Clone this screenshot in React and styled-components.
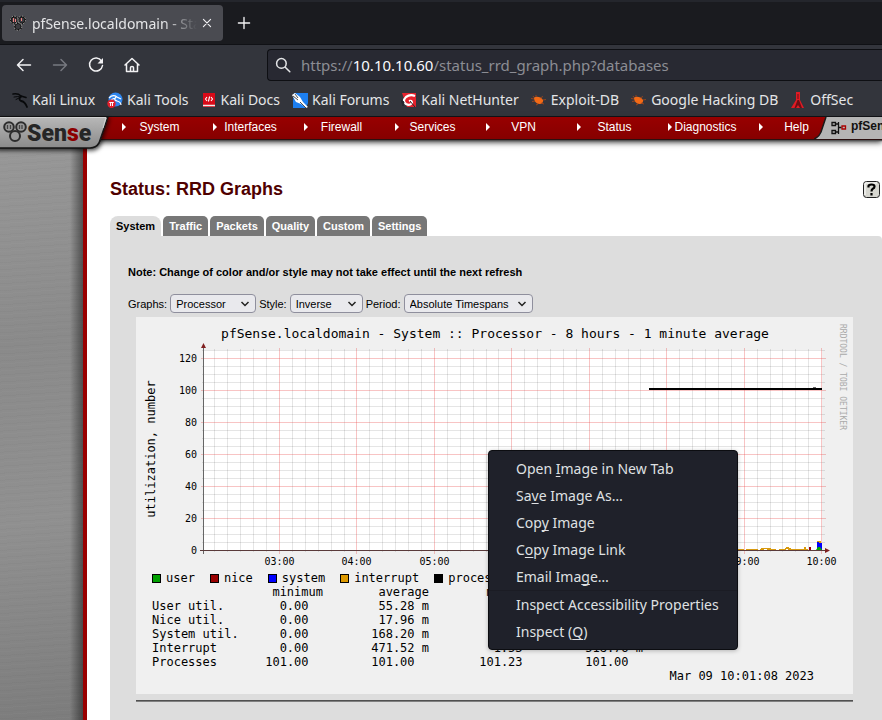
import React from "react";
import styled, { createGlobalStyle, css } from "styled-components";

const GlobalStyle = createGlobalStyle`
  * { box-sizing: border-box; }
  html, body { margin: 0; height: 100%; }
  body { overflow: hidden; background: #fff; }
  #root { height: 100%; }
  button, select, input { font: inherit; color: inherit; }
`;

const uiFont = `"Noto Sans", sans-serif`;
const pageFont = `"Liberation Sans", Arial, sans-serif`;
const monoFont = `"DejaVu Sans Mono", monospace`;

const Window = styled.div`
  position: relative;
  display: flex;
  flex-direction: column;
  height: 100vh;
  overflow: hidden;
`;

/* Browser chrome */

const Chrome = styled.header`
  flex: none;
  background: #33353c;
  border-bottom: 1px solid #101115;
  color: #e4e5e7;
  font-family: ${uiFont};
  font-size: 14px;
`;

const TabStrip = styled.div`
  display: flex;
  align-items: center;
  gap: 13px;
  height: 45px;
  padding: 0 2px;
  background: #1a1b1f;
  border-top: 2px solid #24262c;
  border-bottom: 1px solid #101115;
`;

const BrowserTab = styled.div`
  display: flex;
  align-items: center;
  gap: 6px;
  width: 221px;
  height: 36px;
  padding: 0 8px;
  border-radius: 4px;
  background: #4a4b51;
`;

const TabTitle = styled.span`
  flex: 1;
  overflow: hidden;
  margin-right: -4px;
  white-space: nowrap;
  mask-image: linear-gradient(90deg, #000 80%, transparent 100%);
`;

const IconButton = styled.button`
  display: grid;
  place-items: center;
  width: ${(p) => p.$size || 20}px;
  height: ${(p) => p.$size || 20}px;
  padding: 0;
  border: 0;
  background: none;
  color: ${(p) => (p.$dim ? "#777980" : "#f2f2f4")};
`;

const Toolbar = styled.div`
  display: flex;
  align-items: center;
  height: 40px;
`;

const NavButtons = styled.div`
  display: flex;
  gap: 16px;
  width: 267px;
  padding-left: 14px;
`;

const AddressBar = styled.form`
  display: flex;
  flex: 1;
  align-items: center;
  gap: 10px;
  height: 32px;
  padding-left: 7px;
  border: 1px solid #0e0f13;
  border-right: 0;
  border-radius: 4px 0 0 4px;
  background: #282932;
  font-size: 15px;
`;

const Address = styled.a`
  color: #8c8d94;
  text-decoration: none;
  b { color: #fbfbfe; font-weight: 400; }
`;

const Bookmarks = styled.nav`
  display: flex;
  align-items: center;
  gap: 12px;
  height: 31px;
  padding: 0 0 2px 12px;
  white-space: nowrap;
`;

const Bookmark = styled.a`
  display: flex;
  flex: none;
  align-items: center;
  gap: 4px;
  color: inherit;
  text-decoration: none;
`;

/* pfSense page */

const SiteHeader = styled.header`
  position: relative;
  z-index: 1;
  display: flex;
  flex: none;
  height: 22px;
  background: linear-gradient(#980000, #860000);
  box-shadow: 0 1px 0 #2b1111, 0 2px 1px #555, 0 3px 6px #222;
  color: #fff;
  font: 12px/20px ${pageFont};
`;

const LogoLink = styled.a`
  flex: none;
  width: 114px;
  svg { display: block; overflow: visible; }
`;

const SiteMenu = styled.nav`
  display: flex;
  flex: none;
`;

const MenuButton = styled.button`
  display: grid;
  grid-template-columns: 12px 1fr 12px;
  align-items: center;
  width: 91px;
  padding: 0 0 2px;
  border: 0;
  background: none;
  white-space: nowrap;
  svg { justify-self: end; }
  span { justify-self: center; }
`;

const HostLabel = styled.div`
  display: flex;
  flex: 1;
  align-items: flex-start;
  margin-left: -28px;
  overflow: hidden;
  color: #111;
  font-weight: bold;
  white-space: nowrap;
  svg { flex: none; }
`;

const HostName = styled.span`
  flex: 1;
  height: 22px;
  padding-left: 3px;
  background: #b5b5b5;
  line-height: 18px;
`;

const SiteBody = styled.div`
  display: flex;
  flex: 1;
  min-height: 0;
`;

const SideRail = styled.div`
  flex: none;
  width: 87px;
  border-right: 4px solid #990000;
  background:
    linear-gradient(90deg, transparent 70px, rgba(0, 0, 0, 0.45)),
    repeating-linear-gradient(176deg, rgba(255,255,255,0.02) 0 1px, transparent 1px 4px, rgba(0,0,0,0.02) 4px 5px, transparent 5px 7px),
    linear-gradient(170deg, #989898, #8a8a8a 35%, #909090 65%, #7c7c7c);
`;

const Content = styled.main`
  flex: 1;
  min-width: 0;
  padding: 40px 0 0 23px;
  font: 11px/14px ${pageFont};
  color: #000;
`;

const TitleRow = styled.div`
  display: flex;
  align-items: center;
  justify-content: space-between;
  height: 20px;
  padding-right: 2px;
`;

const PageTitle = styled.h1`
  margin: 0;
  color: #4f0000;
  font-size: 18px;
  line-height: 22px;
`;

const PageTabs = styled.nav`
  display: flex;
  gap: 2px;
  margin-top: 17px;
`;

const PageTab = styled.a`
  height: 20px;
  padding: 0 6px;
  border-radius: 5px 5px 0 0;
  background: #777;
  color: #fff;
  font-weight: bold;
  line-height: 20px;
  text-decoration: none;
  ${(p) => p.$active && css`
    border-radius: 8px 8px 0 0;
    background: #ddd;
    color: #000;
  `}
`;

const Panel = styled.section`
  min-height: 100vh;
  padding: 29px 29px 0 18px;
  border-radius: 0 4px 0 0;
  background: #ddd;
`;

const Note = styled.p`
  margin: 0;
  font-weight: bold;
`;

const Options = styled.form`
  display: flex;
  align-items: center;
  gap: 3px;
  margin: 15px 0 4px;
`;

const Option = styled.label`
  display: flex;
  align-items: center;
  gap: 3px;
`;

const SelectBox = styled.span`
  display: inline-grid;
  align-items: center;
  width: ${(p) => p.$width}px;
  > * { grid-area: 1 / 1; }
  svg { justify-self: end; margin-right: 6px; pointer-events: none; }
`;

const Select = styled.select`
  width: 100%;
  height: 19px;
  padding: 0 5px;
  border: 1px solid #8f8f9d;
  border-radius: 4px;
  background: #e9e9ed;
  appearance: none;
`;

const GraphCard = styled.figure`
  margin: 0 0 6px 8px;
  padding-bottom: 11px;
  background: #f0f0f0;
  font: 12px/14px ${monoFont};
`;

const Chart = styled.svg`
  display: block;
  width: 100%;
  font-family: ${monoFont};
`;

const Legend = styled.ul`
  display: flex;
  gap: 15px;
  margin: 0;
  padding: 0 0 0 16px;
  list-style: none;
`;

const LegendItem = styled.li`
  display: flex;
  align-items: center;
  gap: 5px;
  &::before {
    content: "";
    width: 7px;
    height: 7px;
    border: 1px solid #000;
    background: ${(p) => p.$color};
  }
`;

const Stats = styled.table`
  margin-left: 16px;
  border-collapse: collapse;
  table-layout: fixed;
  width: 491px;
  th, td {
    height: 14px;
    padding: 0;
    font-weight: 400;
    text-align: right;
    white-space: pre;
  }
  tbody th { text-align: left; }
  th:nth-child(1) { width: 86px; }
  th:nth-child(2) { width: 85px; }
  th:nth-child(3) { width: 106px; }
  th:nth-child(4) { width: 108px; }
`;

const Stamp = styled.figcaption`
  padding-right: 39px;
  text-align: right;
`;

const Rule = styled.hr`
  height: 2px;
  margin: 0 0 0 8px;
  border: 0;
  border-top: 1px solid #505050;
  background: #808080;
`;

/* Context menu, floating above the page */

const ContextMenu = styled.div`
  position: absolute;
  z-index: 2;
  top: 450px;
  left: 488px;
  width: 250px;
  padding: 4px 0;
  border: 1px solid #0c0d11;
  border-radius: 4px;
  background: #1f212a;
  box-shadow: 0 1px 4px rgba(0, 0, 0, 0.25);
  color: #dfe0e2;
  font: 14px/27px ${uiFont};
`;

const ContextItem = styled.button`
  display: block;
  width: 100%;
  padding: 0 0 0 27px;
  border: 0;
  background: none;
  text-align: left;
  u { text-underline-offset: 2px; text-decoration-skip-ink: none; }
`;

const MenuDivider = styled.div`
  height: 1px;
  background: #1b1c24;
`;

/* Drawings */

const Line = ({ size = 20, d, w = 1.5 }) => (
  <svg width={size} height={size} viewBox="0 0 20 20" fill="none" stroke="currentColor" strokeWidth={w} strokeLinecap="round" strokeLinejoin="round">
    <path d={d} />
  </svg>
);

const Favicon = () => (
  <svg width="16" height="16" viewBox="0 0 16 16">
    <g fill="#3a3a3e" stroke="#111" strokeWidth="1.6">
      <circle cx="8" cy="11.5" r="3.3" /><circle cx="4.2" cy="5" r="3.4" /><circle cx="11.800" cy="5" r="3.4" />
    </g>
    <g fill="none" stroke="#bbb" strokeWidth=".9" strokeDasharray="1.500 1.500">
      <circle cx="8" cy="11.5" r="3.8" /><circle cx="4.2" cy="5" r="3.9" /><circle cx="11.800" cy="5" r="3.9" />
    </g>
    <path d="M3.500 3v4M5.500 4v3M11.500 3v3" stroke="#f08080" />
  </svg>
);

const BookmarkIcon = ({ kind }) => (
  <svg width="16" height="16" viewBox="0 0 16 16">
    {kind === "linux" && (
      <g fill="none" stroke="#08090b" strokeLinecap="round">
        <path d="M1 2q5-1 8 2l5 1.500" strokeWidth="1.600" />
        <path d="M2 5q4-1 7 0M4 7.500l3-1.500" />
        <path d="M9 4.500q-3 2.500 0 4.500 4 .5 6 6" strokeWidth="1.800" />
      </g>
    )}
    {kind === "tools" && (
      <>
        <circle cx="8.500" cy="7.500" r="7" fill="#2f86ee" />
        <path d="M2 6q4-4 8-1l4 2M4 8q3-2 5-2M9 5q-3 3 1 4t4 4" fill="none" stroke="#fff" strokeWidth="1.200" />
        <circle cx="4.500" cy="11.800" r="4.200" fill="#e21f2c" />
        <path d="M2.300 10.500h4.500M3.600 10.500v3.500M5.500 10.500v3.500" stroke="#fff" />
      </>
    )}
    {kind === "docs" && (
      <>
        <rect x="2" y="1" width="12" height="14" fill="#d90a18" />
        <path d="M2 13.500h12" stroke="#eee" strokeWidth="1.500" />
        <path d="M6 5L4.500 7 6 9M10 5l1.500 2L10 9M8.600 4.500l-1.200 5" fill="none" stroke="#fff" strokeWidth="1.100" />
      </>
    )}
    {kind === "forums" && (
      <>
        <path d="M2 1h14v10l-2 5H1V9z" fill="#1d7ff0" />
        <path d="M0 3l3-2 5 4 3 5 5 5-2 1-5-4-5-2z" fill="#fff" />
        <path d="M1 4l5 4M3 2l3 4M8 10l6 6" stroke="#20242c" strokeWidth=".8" />
      </>
    )}
    {kind === "nethunter" && (
      <>
        <path d="M1 1h14v14H6z" fill="#e5232d" />
        <path d="M14 4Q9 2 5 5q-4 4 0 7 4 2 6-1 0-3-3-2" fill="none" stroke="#fff" strokeWidth="2.200" />
        <path d="M0 8l3 2-1 4zM9 9l5 6" fill="#26282f" stroke="#26282f" />
      </>
    )}
    {kind === "bug" && (
      <>
        <path d="M3 5.500c3-1.500 7-.5 9 2.500.5 2-1 4-3.500 4C5 12 3 9 3 5.500z" fill="#f26a16" />
        <path d="M3 5.500L2 4M5 5V3M9 6l3-1.500M12 8l3-.5M10 11l3 1M7 12l-2 1M4 9L1 9.500M3 7L0 6.500" stroke="#a8481a" strokeWidth=".8" />
      </>
    )}
    {kind === "offsec" && (
      <>
        <path d="M6 0h4v8l4 8H1l5-8z" fill="#e01b24" />
        <path d="M7.500 2v5h1V2zM7.500 8l-3 8h1.500l2-3 2 3h2l-3-8z" fill="#6d0e14" />
      </>
    )}
  </svg>
);

const Logo = () => (
  <svg width="114" height="40" viewBox="0 0 114 40">
    <defs>
      <linearGradient id="metal" x1="0" y1="0" x2="0" y2="1">
        <stop offset="0" stopColor="#b8b8b8" /><stop offset="1" stopColor="#8a8a8a" />
      </linearGradient>
      <filter id="drop" x="-10%" y="-10%" width="120%" height="150%">
        <feDropShadow dx="1" dy="2" stdDeviation="2" floodOpacity=".7" />
      </filter>
    </defs>
    <path d="M-4 0H108L99 26Q96 31 90 31H-4z" fill="url(#metal)" stroke="#151515" strokeWidth="1.500" filter="url(#drop)" />
    <path d="M0 .5H106L103 11" fill="none" stroke="#d2d2d2" />
    <g fill="#999" stroke="#2c2c2c" strokeWidth="2">
      <circle cx="15" cy="19" r="5" /><circle cx="9" cy="10" r="4.800" /><circle cx="21" cy="10" r="4.800" />
    </g>
    <path d="M7.500 8v4M10.500 8v4M19.500 8v4M22 8v4" stroke="#444" strokeWidth="1.300" />
    <text x="27" y="24" fontFamily="Roboto, sans-serif" fontWeight="900" fontSize="23" fill="#262626">
      Sen<tspan fill="#8c0000">s</tspan>e
    </text>
  </svg>
);

const HostIcon = () => (
  <svg width="34" height="22" viewBox="0 0 34 22">
    <path d="M12 0H34V22H0Q5 21 7 15z" fill="#b5b5b5" />
    <path d="M12 0L7 15Q5 20 0 22" fill="none" stroke="#1a1a1a" strokeWidth="1.500" />
    <g fill="none" stroke="#111" strokeWidth="1.300">
      <path d="M18 5.500h3.500v3H18zM18 13.500h3.500v3H18zM21.500 7h3v8h-3M24.500 10.500h3M24.500 5v12" />
      <path d="M28 9h3.500v3H28z" stroke="#a00" />
    </g>
  </svg>
);

const HelpIcon = () => (
  <svg width="17" height="17" viewBox="0 0 17 17">
    <rect x=".5" y=".5" width="16" height="16" rx="3" fill="#d6d6cf" stroke="#222" />
    <path d="M2 14V2h12" fill="none" stroke="#fff" />
    <path d="M5.500 6.500V5q0-1.500 3-1.500t3 2q0 1.500-1.700 2.300Q8.500 8.500 8.500 10.500M8.500 12v2.500" fill="none" stroke="#000" strokeWidth="2.200" />
  </svg>
);

const Chevron = () => (
  <svg width="10" height="6" viewBox="0 0 10 6" fill="none" stroke="#222" strokeWidth="1.500">
    <path d="M1.500 1L5 4.500 8.500 1" />
  </svg>
);

/* Chart geometry: 20 units are 32px tall, one hour is 77.4px wide */
const yOf = (v) => Math.round(233 - v * 1.6) + 0.5;
const xOf = (minutes) => Math.round(143 + (minutes - 180) * 1.2908) + 0.5;
const range = (from, to, step) => {
  const out = [];
  for (let v = from; v <= to; v += step) out.push(v);
  return out;
};
const minorX = range(130, 600, 10).filter((m) => m % 60);
const hours = range(180, 600, 60);
const minorY = range(5, 125, 5).filter((v) => v % 20);
const majorY = range(0, 120, 20);

const RrdChart = () => (
  <Chart viewBox="0 0 717 254" role="img" aria-label="Processor utilization over 8 hours">
    <text x="359" y="21" fontSize="13" textAnchor="middle">
      pfSense.localdomain - System :: Processor - 8 hours - 1 minute average
    </text>
    <rect x="67" y="33" width="619" height="200" fill="#fff" />
    <g stroke="#000" strokeOpacity=".1">
      {minorX.map((m) => <path key={m} d={`M${xOf(m)} 32V235`} />)}
      {minorY.map((v) => <path key={v} d={`M66 ${yOf(v)}H689`} />)}
    </g>
    <g stroke="#e83c3c" strokeOpacity=".3">
      {hours.map((m) => <path key={m} d={`M${xOf(m)} 31V237`} />)}
      {majorY.map((v) => <path key={v} d={`M65 ${yOf(v)}H690`} />)}
    </g>
    <path d="M513 72H686" stroke="#000" strokeWidth="2" />
    <path d="M677 70.500h3" stroke="#000" strokeOpacity=".6" />
    <path d="M540 232.500h8m2 0h6m2 0h14m3 0h9m2 0h22m2 0h12m2 0h4m3 0h9m3 0h7m2 0h20M625 231.500h10M649 231.500h6M650 230.500h3" stroke="#d89a10" />
    <path d="M668 230h2v3h-2zM681 224h4v2h-4z" fill="#d89a10" />
    <path d="M673 230h2v3h-2z" fill="#900" />
    <path d="M681 233v-8h2v1h3v7z" fill="#00f" />
    <path d="M680 233l2-3h2l2 3z" fill="#0a0" />
    <path d="M67.500 31V237" stroke="#666" />
    <path d="M64 233.500H690" stroke="#5a3b3b" />
    <path d="M65 31L67.500 26 70 31zM689 231l5 2.500-5 2.500z" fill="#802020" />
    <g fontSize="10">
      {majorY.map((v) => <text key={v} x="61" y={yOf(v) + 3} textAnchor="end">{v}</text>)}
      {hours.map((m) => (
        <text key={m} x={xOf(m)} y="248" textAnchor="middle">{String(m / 60).padStart(2, "0")}:00</text>
      ))}
    </g>
    <text transform="translate(19 132) rotate(-90)" fontSize="12" textAnchor="middle">utilization, number</text>
    <text transform="translate(704 7) rotate(90)" fontSize="8" fill="#aaa">RRDTOOL / TOBI OETIKER</text>
  </Chart>
);

const bookmarks = [
  ["linux", "Kali Linux"], ["tools", "Kali Tools"], ["docs", "Kali Docs"], ["forums", "Kali Forums"],
  ["nethunter", "Kali NetHunter"], ["bug", "Exploit-DB"], ["bug", "Google Hacking DB"], ["offsec", "OffSec"],
];
const menus = ["System", "Interfaces", "Firewall", "Services", "VPN", "Status", "Diagnostics", "Help"];
const tabs = ["System", "Traffic", "Packets", "Quality", "Custom", "Settings"];
const options = [["Graphs:", "Processor", 86], ["Style:", "Inverse", 73], ["Period:", "Absolute Timespans", 129]];
const legend = [["user", "#00a000"], ["nice", "#990000"], ["system", "#0000ff"], ["interrupt", "#dd9900"], ["processes", "#000"]];
const stats = [
  ["User util.", "0.00  ", "55.28 m", "", ""],
  ["Nice util.", "0.00  ", "17.96 m", "", ""],
  ["System util.", "0.00  ", "168.20 m", "", ""],
  ["Interrupt", "0.00  ", "471.52 m", "1.53  ", "518.76 m"],
  ["Processes", "101.00  ", "101.00  ", "101.23  ", "101.00  "],
];

export default function App() {
  return (
    <Window>
      <GlobalStyle />
      <Chrome>
        <TabStrip>
          <BrowserTab>
            <Favicon />
            <TabTitle>pfSense.localdomain - Status: RRD Graphs</TabTitle>
            <IconButton $size={16} aria-label="Close tab"><Line size={16} w={1.4} d="M5.500 5.500l9 9M14.500 5.500l-9 9" /></IconButton>
          </BrowserTab>
          <IconButton $size={16} aria-label="New tab"><Line size={16} w={1.7} d="M10 3v14M3 10h14" /></IconButton>
        </TabStrip>
        <Toolbar>
          <NavButtons>
            <IconButton aria-label="Back"><Line d="M16.500 10H3.500M9 4.500L3.500 10 9 15.500" /></IconButton>
            <IconButton $dim disabled aria-label="Forward"><Line d="M3.500 10h13M11 4.500l5.500 5.500L11 15.500" /></IconButton>
            <IconButton aria-label="Reload">
              <svg width="20" height="20" viewBox="0 0 20 20" fill="none" stroke="currentColor" strokeWidth="1.500">
                <path d="M15.500 6A6.500 6.500 0 1 0 16.500 10.500" strokeLinecap="round" />
                <path d="M17 3v5.500h-5.500z" fill="currentColor" stroke="none" />
              </svg>
            </IconButton>
            <IconButton aria-label="Home"><Line d="M3 10L10 3.500 17 10M4.500 9v7.500h11V9M8.500 16.500v-4q0-1 1.500-1t1.500 1v4" /></IconButton>
          </NavButtons>
          <AddressBar>
            <Line size={16} w={1.9} d="M8 2a6 6 0 1 0 0 12a6 6 0 1 0 0-12M12.500 12.500l6 6" />
            <Address href="#">https://<b>10.10.10.60</b>/status_rrd_graph.php?databases</Address>
          </AddressBar>
        </Toolbar>
        <Bookmarks>
          {bookmarks.map(([kind, name]) => (
            <Bookmark key={name} href="#"><BookmarkIcon kind={kind} />{name}</Bookmark>
          ))}
        </Bookmarks>
      </Chrome>

      <SiteHeader>
        <LogoLink href="#" aria-label="pfSense home"><Logo /></LogoLink>
        <SiteMenu>
          {menus.map((m) => (
            <MenuButton key={m}>
              <svg width="4" height="8" viewBox="0 0 4 8"><path d="M0 0l4 4-4 4z" fill="#fff" /></svg>
              <span>{m}</span>
            </MenuButton>
          ))}
        </SiteMenu>
        <HostLabel>
          <HostIcon />
          <HostName>pfSense.localdomain</HostName>
        </HostLabel>
      </SiteHeader>

      <SiteBody>
        <SideRail />
        <Content>
          <TitleRow>
            <PageTitle>Status: RRD Graphs</PageTitle>
            <IconButton $size={17} aria-label="Help"><HelpIcon /></IconButton>
          </TitleRow>
          <PageTabs>
            {tabs.map((t, i) => <PageTab key={t} href="#" $active={i === 0}>{t}</PageTab>)}
          </PageTabs>
          <Panel>
            <Note>Note: Change of color and/or style may not take effect until the next refresh</Note>
            <Options>
              {options.map(([label, value, width]) => (
                <Option key={label}>
                  {label}
                  <SelectBox $width={width}>
                    <Select defaultValue={value}><option>{value}</option></Select>
                    <Chevron />
                  </SelectBox>
                </Option>
              ))}
            </Options>
            <GraphCard>
              <RrdChart />
              <Legend>
                {legend.map(([name, color]) => <LegendItem key={name} $color={color}>{name}</LegendItem>)}
              </Legend>
              <Stats>
                <thead>
                  <tr><th /><th scope="col">minimum</th><th scope="col">average</th><th scope="col">maximum</th><th /></tr>
                </thead>
                <tbody>
                  {stats.map(([name, ...values]) => (
                    <tr key={name}>
                      <th scope="row">{name}</th>
                      {values.map((v, i) => <td key={i}>{v}</td>)}
                    </tr>
                  ))}
                </tbody>
              </Stats>
              <Stamp>Mar 09 10:01:08 2023</Stamp>
            </GraphCard>
            <Rule />
          </Panel>
        </Content>
      </SiteBody>

      <ContextMenu role="menu">
        <ContextItem role="menuitem">Open <u>I</u>mage in New Tab</ContextItem>
        <ContextItem role="menuitem">Sa<u>v</u>e Image As…</ContextItem>
        <ContextItem role="menuitem">Cop<u>y</u> Image</ContextItem>
        <ContextItem role="menuitem">C<u>o</u>py Image Link</ContextItem>
        <ContextItem role="menuitem">Email Ima<u>g</u>e…</ContextItem>
        <MenuDivider role="separator" />
        <ContextItem role="menuitem">Inspect Accessibility Properties</ContextItem>
        <ContextItem role="menuitem">Inspect (<u>Q</u>)</ContextItem>
      </ContextMenu>
    </Window>
  );
}
